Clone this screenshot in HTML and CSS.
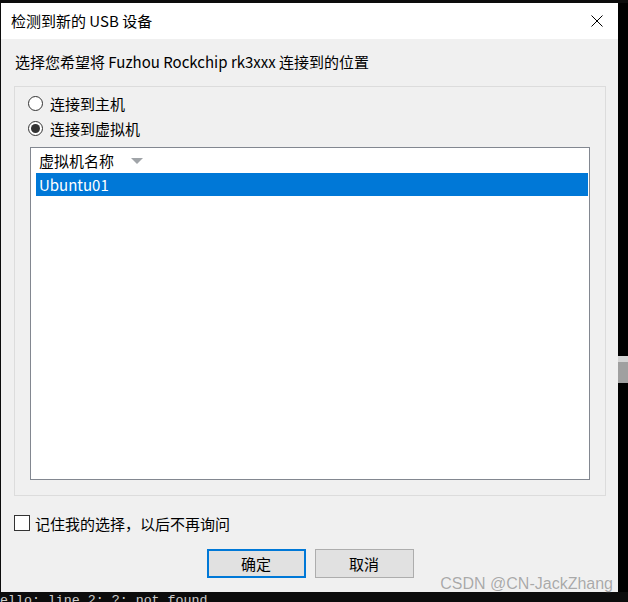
FILE: index.html
```html
<!DOCTYPE html>
<html lang="zh-CN">
<head>
<meta charset="utf-8">
<title>检测到新的 USB 设备</title>
<link rel="stylesheet" href="styles.css">
</head>
<body>
<div class="screen">
  <div class="term-top"></div>
  <div class="middle">
    <div class="edge-left"></div>
    <div class="dialog">
      <div class="titlebar">
        <span class="title">检测到新的 USB 设备</span>
        <svg class="close" width="12" height="12" viewBox="0 0 12 12"><path d="M0.5 0.5 L11.5 11.5 M11.5 0.5 L0.5 11.5" stroke="#000" stroke-width="1" fill="none"/></svg>
      </div>
      <div class="content">
        <p class="prompt">选择您希望将 Fuzhou Rockchip rk3xxx 连接到的位置</p>
        <div class="group">
          <label class="radio-row"><span class="radio"></span><span>连接到主机</span></label>
          <label class="radio-row"><span class="radio checked"></span><span>连接到虚拟机</span></label>
          <div class="listbox">
            <div class="list-header"><span>虚拟机名称</span><span class="sort-tri"></span></div>
            <div class="list-item selected">Ubuntu01</div>
          </div>
        </div>
        <label class="check-row"><span class="checkbox"></span><span>记住我的选择，以后不再询问</span></label>
        <div class="buttons">
          <button class="btn primary">确定</button>
          <button class="btn">取消</button>
        </div>
      </div>
    </div>
    <div class="edge-right"><div class="scroll-thumb"></div></div>
  </div>
  <div class="term-bottom">ello: line 2: ?: not found</div>
  <div class="watermark">CSDN @CN-JackZhang</div>
</div>
</body>
</html>
```

FILE: styles.css
```css
* { box-sizing: border-box; }
html, body { margin: 0; padding: 0; }
body {
  background: #0c0c0c;
  width: 628px;
  height: 602px;
  overflow: hidden;
  font-family: "Noto Sans CJK SC", "Noto Sans", sans-serif;
  font-size: 15px;
  color: #000;
}
.screen {
  position: relative;
  width: 628px;
  height: 602px;
  display: flex;
  flex-direction: column;
}
.term-top { height: 3px; background: #0c0c0c; }
.middle { display: flex; height: 589px; }
.edge-left { width: 1px; background: #0c0c0c; }
.edge-right { width: 10px; background: #000; padding-top: 353px; }
.scroll-thumb {
  height: 27px;
  background: #a0a0a0;
  border-top: 6px solid #d4d4d4;
}
.dialog {
  width: 617px;
  display: flex;
  flex-direction: column;
}
.titlebar {
  height: 36px;
  background: #fff;
  display: flex;
  align-items: center;
  justify-content: space-between;
  padding: 0 15px 0 10px;
  line-height: 20px;
}
.close { display: block; }
.content {
  flex: 1;
  background: #f0f0f0;
  padding: 13px 12px 14px 13px;
  display: flex;
  flex-direction: column;
}
.prompt {
  margin: 0 0 14px 1px;
  line-height: 20px;
  height: 20px;
}
.group {
  width: 592px;
  height: 410px;
  border: 1px solid #dcdcdc;
  padding: 4px 15px 15px 15px;
  display: flex;
  flex-direction: column;
}
.radio-row {
  height: 24px;
  display: flex;
  align-items: center;
  gap: 7px;
  margin-left: -2px;
  margin-bottom: 1px;
}
.radio {
  width: 15px;
  height: 15px;
  border: 1px solid #333;
  border-radius: 50%;
  background: #fff;
  display: flex;
  align-items: center;
  justify-content: center;
}
.radio.checked::after {
  content: "";
  width: 9px;
  height: 9px;
  border-radius: 50%;
  background: #333;
}
.listbox {
  margin-top: 6px;
  height: 333px;
  border: 1px solid #828790;
  background: #fff;
}
.list-header {
  height: 25px;
  display: flex;
  align-items: center;
  padding-left: 8px;
  gap: 17px;
}
.sort-tri {
  width: 0;
  height: 0;
  border-left: 6px solid transparent;
  border-right: 6px solid transparent;
  border-top: 6px solid #a0a4a8;
  margin-top: 1px;
}
.list-item {
  height: 23px;
  line-height: 23px;
  margin: 0 1px 0 5px;
  padding-left: 3px;
}
.list-item.selected { background: #0078d7; color: #fff; }
.check-row {
  margin-top: 19px;
  height: 16px;
  display: flex;
  align-items: center;
  gap: 5px;
}
.checkbox {
  width: 16px;
  height: 16px;
  border: 1px solid #333;
  background: #fff;
}
.buttons {
  margin-top: 18px;
  display: flex;
  justify-content: center;
  gap: 9px;
}
.btn {
  width: 99px;
  height: 29px;
  font: inherit;
  color: #000;
  background: #e1e1e1;
  border: 1px solid #adadad;
  padding: 0;
}
.btn.primary { border: 2px solid #0078d7; }
.term-bottom {
  height: 10px;
  overflow: hidden;
  font-family: "Liberation Mono", monospace;
  font-size: 13.3px;
  line-height: 18px;
  color: #cccccc;
  white-space: pre;
}
.watermark {
  position: absolute;
  right: 15px;
  top: 575px;
  font-family: "Liberation Sans", Arial, sans-serif;
  font-size: 16px;
  line-height: 18px;
  color: #a9a9a9;
  text-shadow: 0 0 1px #fff;
}
```
